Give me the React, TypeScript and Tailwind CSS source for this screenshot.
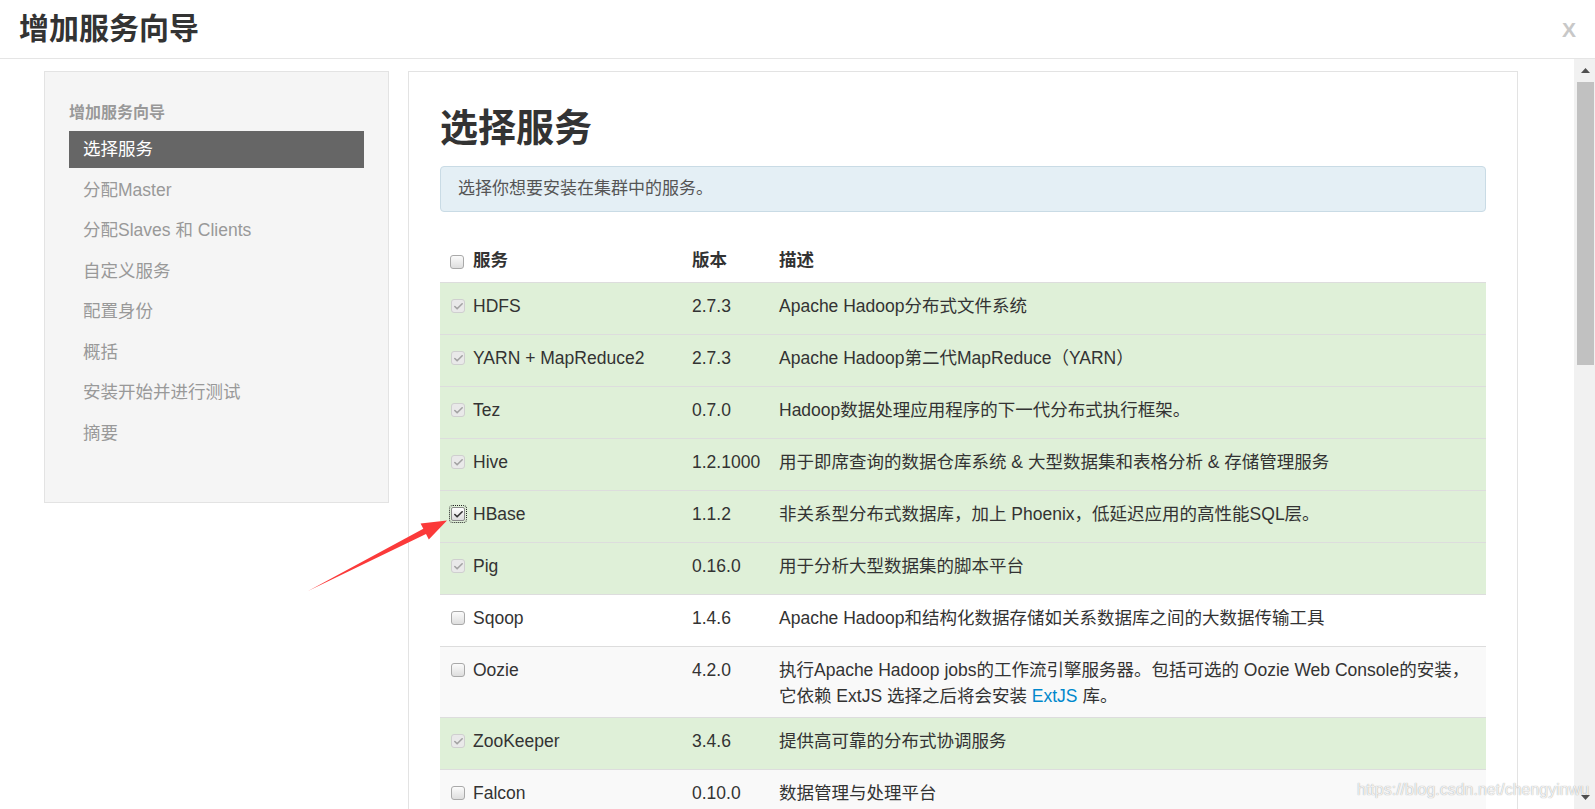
import {Check} from 'lucide-react';

type Svc = {
    name: string;
    version: string;
    desc: React.ReactNode;
    state: 'locked' | 'focus' | 'off';
    bg: string;
};

const services: Svc[] = [
    {name: 'HDFS', version: '2.7.3', desc: 'Apache Hadoop分布式文件系统', state: 'locked', bg: 'bg-[#dff0d8]'},
    {name: 'YARN + MapReduce2', version: '2.7.3', desc: 'Apache Hadoop第二代MapReduce（YARN）', state: 'locked', bg: 'bg-[#dff0d8]'},
    {name: 'Tez', version: '0.7.0', desc: 'Hadoop数据处理应用程序的下一代分布式执行框架。', state: 'locked', bg: 'bg-[#dff0d8]'},
    {name: 'Hive', version: '1.2.1000', desc: '用于即席查询的数据仓库系统 & 大型数据集和表格分析 & 存储管理服务', state: 'locked', bg: 'bg-[#dff0d8]'},
    {name: 'HBase', version: '1.1.2', desc: '非关系型分布式数据库，加上 Phoenix，低延迟应用的高性能SQL层。', state: 'focus', bg: 'bg-[#dff0d8]'},
    {name: 'Pig', version: '0.16.0', desc: '用于分析大型数据集的脚本平台', state: 'locked', bg: 'bg-[#dff0d8]'},
    {name: 'Sqoop', version: '1.4.6', desc: 'Apache Hadoop和结构化数据存储如关系数据库之间的大数据传输工具', state: 'off', bg: 'bg-white'},
    {
        name: 'Oozie', version: '4.2.0', state: 'off', bg: 'bg-[#f9f9f9]',
        desc: (
            <>
                <span className="block whitespace-nowrap">执行Apache Hadoop jobs的工作流引擎服务器。包括可选的 Oozie Web Console的安装，</span>
                <span className="block whitespace-nowrap">它依赖 ExtJS 选择之后将会安装 <span className="text-[#0088cc]">ExtJS</span> 库。</span>
            </>
        ),
    },
    {name: 'ZooKeeper', version: '3.4.6', desc: '提供高可靠的分布式协调服务', state: 'locked', bg: 'bg-[#dff0d8]'},
    {name: 'Falcon', version: '0.10.0', desc: '数据管理与处理平台', state: 'off', bg: 'bg-[#f9f9f9]'},
];

const steps = ['选择服务', '分配Master', '分配Slaves 和 Clients', '自定义服务', '配置身份', '概括', '安装开始并进行测试', '摘要'];

const Box = ({state}: {state: 'locked' | 'focus' | 'off'}) => {
    if (state === 'locked') {
        return (
            <span className="w-[14px] h-[14px] rounded-[3px] border border-[#cfcfcf] bg-[#e9e9e9] flex items-center justify-center">
                <Check size={11} strokeWidth={3.5} className="text-[#a3a3a3]"/>
            </span>
        );
    }
    if (state === 'focus') {
        return (
            <span className="w-[14px] h-[14px] rounded-[2px] border border-[#8a8a8a] bg-gradient-to-b from-white to-[#dcdcdc] flex items-center justify-center outline-1 outline-dotted outline-[#222] outline-offset-[1px]">
                <Check size={11} strokeWidth={3.5} className="text-[#333]"/>
            </span>
        );
    }
    return <span className="w-[14px] h-[14px] rounded-[3px] border border-[#a9a9a9] bg-gradient-to-b from-[#fbfbfb] to-[#dedede]"/>;
};

export default function App() {
    return (
        <div className="relative w-[1595px] h-[809px] overflow-hidden bg-white font-['Liberation_Sans','Noto_Sans_CJK_SC',sans-serif] text-[#333]">
            <div className="h-[59px] border-b border-[#e5e5e5] flex items-center justify-between pl-[19px] pr-[19px]">
                <h1 className="text-[30px] font-bold leading-none text-[#333]">增加服务向导</h1>
                <span className="text-[21px] font-bold text-[#c8c8c8] leading-none">X</span>
            </div>

            <div className="flex h-[750px]">
                <div className="flex-1 flex items-start gap-[19px] pl-[44px] pr-[56px] pt-[12px]">
                    <div className="w-[345px] shrink-0 border border-[#e3e3e3] bg-[#f5f5f5] pt-[28px] px-[24px] pb-[47px]">
                        <div className="h-[26px] leading-[26px] text-[16px] font-bold text-[#999] mb-[5px]">增加服务向导</div>
                        {steps.map((s, i) => (
                            <div key={s}
                                 className={`h-[37px] leading-[37px] pl-[14px] text-[17.5px] mb-[3.5px] ${i === 0 ? 'bg-[#666] text-white' : 'text-[#999]'}`}>
                                {s}
                            </div>
                        ))}
                    </div>

                    <div className="flex-1 h-[740px] border border-[#e3e3e3] bg-white pt-[35px] px-[31px]">
                        <h2 className="text-[38px] font-bold leading-[42px] text-[#333] mb-[17px]">选择服务</h2>
                        <div className="h-[46px] border border-[#c9dbe5] bg-[#e4eff5] rounded-[4px] pl-[17px] flex items-center text-[17px] text-[#555]">
                            选择你想要安装在集群中的服务。
                        </div>

                        <div className="text-[17.5px]">
                            <div className="h-[71px] border-b border-[#dddddd] flex items-end pb-[9px] font-bold leading-[26px]">
                                <div className="w-[252px] pl-[10px] flex gap-[9px]">
                                    <span className="h-[26px] flex items-center translate-y-[2px]"><Box state="off"/></span>
                                    <span>服务</span>
                                </div>
                                <div className="w-[87px]">版本</div>
                                <div>描述</div>
                            </div>
                            {services.map(s => (
                                <div key={s.name}
                                     className={`flex min-h-[52px] border-b border-[#dddddd] pt-[10px] pb-[8px] leading-[26px] ${s.bg}`}>
                                    <div className="w-[252px] pl-[11px] flex gap-[8px]">
                                        <span className="h-[26px] flex items-center"><Box state={s.state}/></span>
                                        <span>{s.name}</span>
                                    </div>
                                    <div className="w-[87px]">{s.version}</div>
                                    <div className="flex-1 pr-[10px]">{s.desc}</div>
                                </div>
                            ))}
                        </div>
                    </div>
                </div>

                <div className="w-[21px] bg-[#f1f1f1] flex flex-col items-center">
                    <svg width="9" height="5" viewBox="0 0 9 5" className="mt-[9px] ml-[2px]">
                        <path d="M0 5 L4.5 0 L9 5 Z" fill="#505050"/>
                    </svg>
                    <div className="w-[17px] h-[283px] bg-[#c1c1c1] mt-[9px] ml-[2px]"/>
                    <div className="flex-1"/>
                    <svg width="9" height="5" viewBox="0 0 9 5" className="mb-[9px] ml-[2px]">
                        <path d="M0 0 L9 0 L4.5 5 Z" fill="#505050"/>
                    </svg>
                </div>
            </div>

            <svg className="absolute left-[300px] top-[505px]" width="160" height="95" viewBox="300 505 160 95">
                <polygon points="308,591 423.3,528.7 420.6,523.4 447,520.5 428.8,539.4 426,534" fill="#fb3a3a"/>
            </svg>

            <div className="absolute left-[1357px] top-[779px] whitespace-nowrap text-[16px] leading-[22px] text-white/85 [text-shadow:0_0_1px_rgba(0,0,0,0.45)]">
                https://blog.csdn.net/chengyinwu
            </div>
        </div>
    );
}
